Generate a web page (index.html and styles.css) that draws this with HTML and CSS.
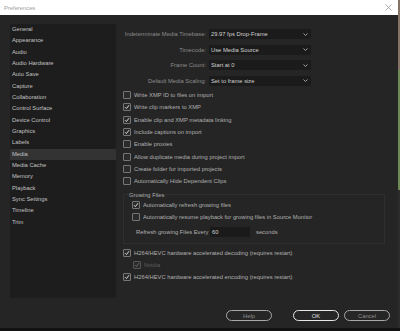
FILE: index.html
```html
<!DOCTYPE html>
<html lang="en">
<head>
    <meta charset="UTF-8">
    <meta name="viewport" content="width=device-width, initial-scale=1.0">
    <title>Preferences</title>
    <link rel="stylesheet" href="styles.css">
</head>
<body>
    <div class="screen">
        <div class="dialog">
            <div class="titlebar">
                <span class="title">Preferences</span>
                <svg class="close" width="7" height="7" viewBox="0 0 7 7"><path d="M0.5 0.5L6.5 6.5M6.5 0.5L0.5 6.5" stroke="#9a9a9a" stroke-width="0.8" fill="none"/></svg>
            </div>
            <div class="content">
                <ul class="nav">
                    <li>General</li>
                    <li>Appearance</li>
                    <li>Audio</li>
                    <li>Audio Hardware</li>
                    <li>Auto Save</li>
                    <li>Capture</li>
                    <li>Collaboration</li>
                    <li>Control Surface</li>
                    <li>Device Control</li>
                    <li>Graphics</li>
                    <li>Labels</li>
                    <li class="active">Media</li>
                    <li>Media Cache</li>
                    <li>Memory</li>
                    <li>Playback</li>
                    <li>Sync Settings</li>
                    <li>Timeline</li>
                    <li>Trim</li>
                </ul>
                <div class="panel">
                    <div class="fields">
                        <label>Indeterminate Media Timebase:</label>
                        <div class="select">29.97 fps Drop-Frame<svg class="chev" width="5" height="3" viewBox="0 0 5 3"><path d="M0.5 0.5L2.5 2.5L4.5 0.5" stroke="#a0a0a0" stroke-width="1" fill="none"/></svg></div>
                        <label>Timecode:</label>
                        <div class="select">Use Media Source<svg class="chev" width="5" height="3" viewBox="0 0 5 3"><path d="M0.5 0.5L2.5 2.5L4.5 0.5" stroke="#a0a0a0" stroke-width="1" fill="none"/></svg></div>
                        <label>Frame Count:</label>
                        <div class="select">Start at 0<svg class="chev" width="5" height="3" viewBox="0 0 5 3"><path d="M0.5 0.5L2.5 2.5L4.5 0.5" stroke="#a0a0a0" stroke-width="1" fill="none"/></svg></div>
                        <label>Default Media Scaling:</label>
                        <div class="select">Set to frame size<svg class="chev" width="5" height="3" viewBox="0 0 5 3"><path d="M0.5 0.5L2.5 2.5L4.5 0.5" stroke="#a0a0a0" stroke-width="1" fill="none"/></svg></div>
                    </div>

                    <div class="checks">
                        <div class="check"><span class="box"></span>Write XMP ID to files on import</div>
                        <div class="check"><span class="box on"><svg width="6" height="6" viewBox="0 0 6 6"><path d="M1 3.2L2.4 4.6L5 1.2" stroke="#d8d8d8" stroke-width="1" fill="none"/></svg></span>Write clip markers to XMP</div>
                        <div class="check"><span class="box on"><svg width="6" height="6" viewBox="0 0 6 6"><path d="M1 3.2L2.4 4.6L5 1.2" stroke="#d8d8d8" stroke-width="1" fill="none"/></svg></span>Enable clip and XMP metadata linking</div>
                        <div class="check"><span class="box on"><svg width="6" height="6" viewBox="0 0 6 6"><path d="M1 3.2L2.4 4.6L5 1.2" stroke="#d8d8d8" stroke-width="1" fill="none"/></svg></span>Include captions on import</div>
                        <div class="check"><span class="box"></span>Enable proxies</div>
                        <div class="check"><span class="box"></span>Allow duplicate media during project import</div>
                        <div class="check"><span class="box"></span>Create folder for imported projects</div>
                        <div class="check"><span class="box"></span>Automatically Hide Dependent Clips</div>
                    </div>

                    <fieldset class="group">
                        <legend>Growing Files</legend>
                        <div class="group-body">
                            <div class="check"><span class="box on"><svg width="6" height="6" viewBox="0 0 6 6"><path d="M1 3.2L2.4 4.6L5 1.2" stroke="#d8d8d8" stroke-width="1" fill="none"/></svg></span>Automatically refresh growing files</div>
                            <div class="check"><span class="box"></span>Automatically resume playback for growing files in Source Monitor</div>
                            <div class="refresh">
                                <span class="refresh-label">Refresh growing Files Every</span>
                                <span class="input">60</span>
                                <span>seconds</span>
                            </div>
                        </div>
                    </fieldset>

                    <div class="checks after">
                        <div class="check"><span class="box on"><svg width="6" height="6" viewBox="0 0 6 6"><path d="M1 3.2L2.4 4.6L5 1.2" stroke="#d8d8d8" stroke-width="1" fill="none"/></svg></span>H264/HEVC hardware accelerated decoding (requires restart)</div>
                        <div class="check sub disabled"><span class="box on"><svg width="6" height="6" viewBox="0 0 6 6"><path d="M1 3.2L2.4 4.6L5 1.2" stroke="#6a6a6a" stroke-width="1" fill="none"/></svg></span>Nvidia</div>
                        <div class="check"><span class="box on"><svg width="6" height="6" viewBox="0 0 6 6"><path d="M1 3.2L2.4 4.6L5 1.2" stroke="#d8d8d8" stroke-width="1" fill="none"/></svg></span>H264/HEVC hardware accelerated encoding (requires restart)</div>
                    </div>
                </div>
            </div>
            <div class="footer">
                <button class="btn help">Help</button>
                <button class="btn primary">OK</button>
                <button class="btn">Cancel</button>
            </div>
        </div>
        <div class="backdrop"></div>
    </div>
    <div class="taskbar"></div>
</body>
</html>
```

FILE: styles.css
```css
body {
    margin: 0;
    background-color: #141414;
    font-family: "Liberation Sans", Arial, sans-serif;
    font-size: 5.8px;
    color: #b0b0b0;
    white-space: nowrap;
}

.screen {
    display: flex;
    height: 328px;
}

.dialog {
    width: 398px;
    display: flex;
    flex-direction: column;
    background-color: #252525;
}

.backdrop {
    width: 2px;
    background: linear-gradient(#857465 0 70px, #6e8b55 70px 190px, #2c2c2c 190px);
}

.taskbar {
    height: 3px;
    background-color: #121212;
}

/* title bar */
.titlebar {
    height: 15px;
    background-color: #fff;
    display: flex;
    align-items: center;
    justify-content: space-between;
    padding: 0 6px 0 4px;
}

.title {
    color: #a0a0a0;
}

/* main area */
.content {
    display: flex;
    padding-top: 9px;
    height: 274px;
}

.nav {
    list-style: none;
    margin: 0 0 0 10px;
    padding: 0;
    width: 106px;
    background-color: #1d1d1d;
}

.nav li {
    height: 11.33px;
    line-height: 11.33px;
    padding-left: 2px;
    color: #c2c2c2;
}

.nav li.active {
    background-color: #333;
}

.panel {
    flex: 1;
    padding: 5px 0 0 7px;
}

.fields {
    display: grid;
    grid-template-columns: 83px 102px;
    column-gap: 3px;
    row-gap: 5.5px;
}

.fields label {
    text-align: right;
    line-height: 10px;
    color: #8c8c8c;
}

.select {
    height: 10px;
    line-height: 10px;
    background-color: #1b1b1b;
    color: #d0d0d0;
    padding-left: 2px;
    display: flex;
    justify-content: space-between;
    align-items: center;
    padding-right: 3px;
}

.checks {
    margin-top: 3.3px;
}

.check {
    height: 12.33px;
    display: flex;
    align-items: center;
    gap: 3px;
    color: #b0b0b0;
}

.box {
    width: 6px;
    height: 6px;
    border: 1px solid #767676;
    border-radius: 1px;
    background-color: #2b2b2b;
    display: flex;
    align-items: center;
    justify-content: center;
    flex-shrink: 0;
}

.box svg {
    display: block;
}

.group {
    margin: 3.5px 0 0 0;
    width: 262px;
    box-sizing: border-box;
    border: 1px solid #2f2f2f;
    padding: 0 0 6px 0;
}

.group legend {
    margin-left: 4px;
    padding: 0 1px;
    line-height: 8px;
    color: #b0b0b0;
}

.group-body {
    padding-left: 8px;
}

.refresh {
    display: flex;
    align-items: center;
    height: 10px;
    margin-top: 3px;
    padding-left: 4px;
}

.refresh-label {
    width: 74px;
}

.input {
    width: 38px;
    height: 10px;
    line-height: 10px;
    background-color: #1a1a1a;
    color: #d0d0d0;
    padding-left: 2px;
    margin-right: 6px;
}

.checks.after {
    margin-top: 3px;
}

.check.sub {
    padding-left: 10px;
}

.check.disabled {
    color: #5e5e5e;
}

.check.disabled .box {
    border-color: #555;
}

/* buttons */
.footer {
    display: flex;
    justify-content: flex-end;
    padding: 12px 8px 0 0;
    gap: 5px;
}

.btn {
    width: 46px;
    height: 11px;
    padding: 0;
    border: 1px solid #a8a8a8;
    border-radius: 6px;
    background-color: #262626;
    color: #8e8e8e;
    font-family: inherit;
    font-size: 5.8px;
}

.btn.help {
    margin-right: 16px;
}

.btn.primary {
    border: 1.5px solid #e6e6e6;
    color: #e0e0e0;
}
```
